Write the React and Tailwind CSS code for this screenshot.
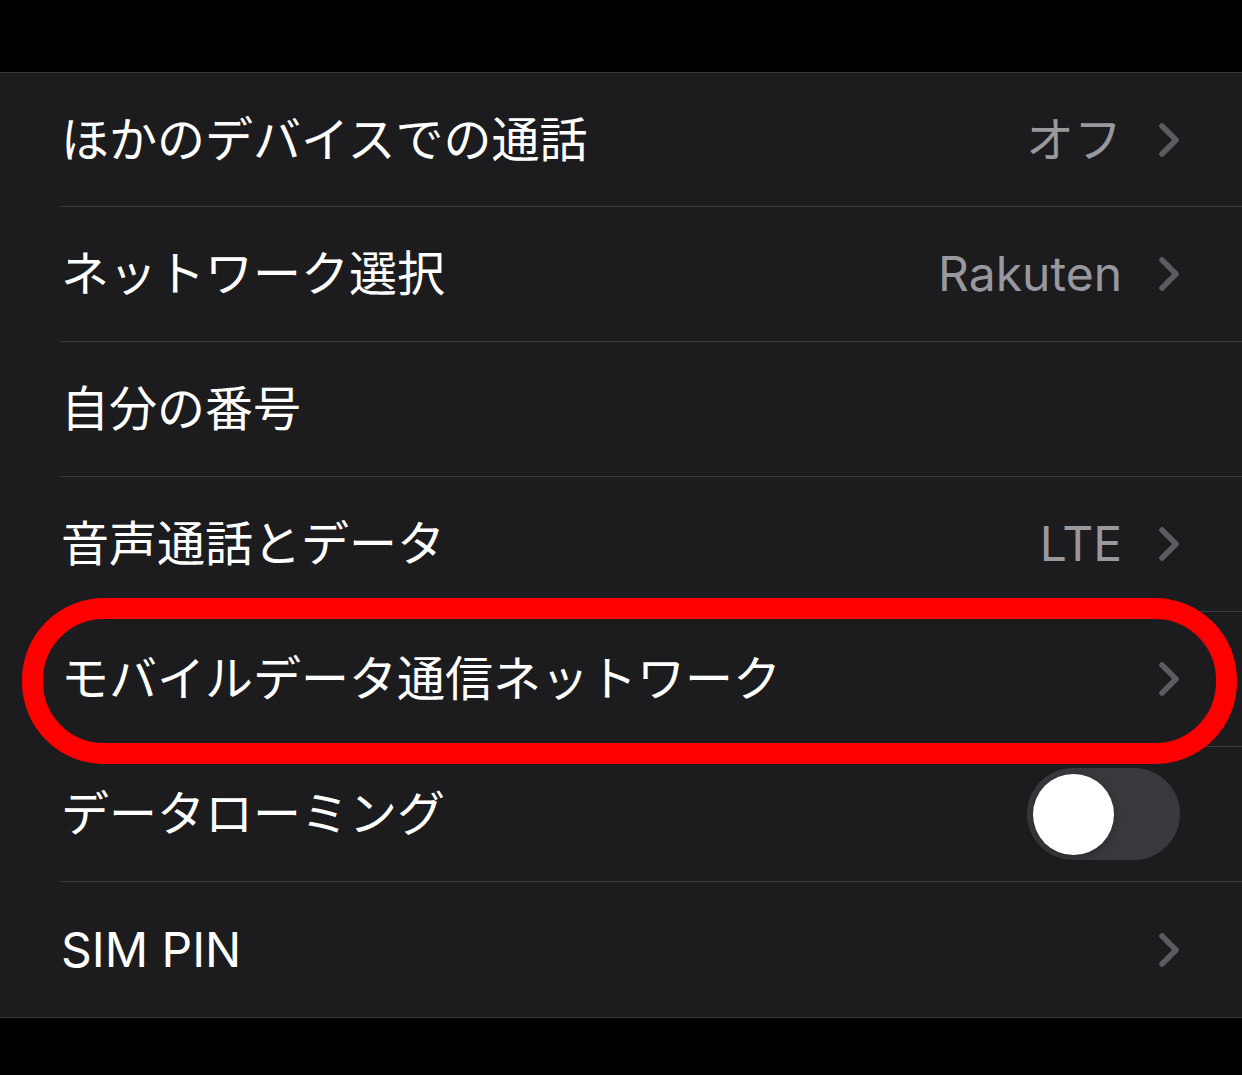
const FONT = "font-['Inter','Noto_Sans_CJK_JP',sans-serif]";

function Chevron() {
  return (
    <svg width="22" height="36" viewBox="0 0 22 36" className="shrink-0">
      <path d="M4 4 L18 18 L4 32" fill="none" stroke="#5c5c60" strokeWidth="5.5" strokeLinecap="round" strokeLinejoin="round" />
    </svg>
  );
}

function Toggle() {
  return (
    <div className="w-[153px] h-[92px] rounded-full bg-[#39393d] flex items-center pl-[6px]">
      <div className="w-[81px] h-[81px] rounded-full bg-white shadow-[0_3px_8px_rgba(0,0,0,0.25)]" />
    </div>
  );
}

function Row({ label, value, chevron = true, toggle = false, last = false, highlight = false, first = false }) {
  return (
    <div className={`relative pl-[60px] flex ${first ? 'h-[134px]' : 'h-[135px]'}`}>
      <div className={`flex-1 flex items-center pr-[62px] ${last ? '' : 'border-b border-[#38383a]'}`}>
        <span className="pl-[1px] text-white text-[48px] leading-none flex-1 whitespace-nowrap">{label}</span>
        {value && <span className="text-[#98989e] text-[48px] leading-none mr-[36px]">{value}</span>}
        {chevron && !toggle && <Chevron />}
        {toggle && <Toggle />}
      </div>
      {highlight && (
        <div className="absolute left-[22px] right-[5px] top-[-14px] bottom-[-17px] rounded-[82px] border-[21px] border-[#ff0000] pointer-events-none" />
      )}
    </div>
  );
}

export default function App() {
  return (
    <div className={`w-[1242px] h-[1075px] bg-black ${FONT}`}>
      <div className="h-[72px]" />
      <div className="bg-[#1c1c1e] border-t border-b border-[#38383a]">
        <Row label="ほかのデバイスでの通話" value="オフ" first />
        <Row label="ネットワーク選択" value="Rakuten" />
        <Row label="自分の番号" chevron={false} />
        <Row label="音声通話とデータ" value="LTE" />
        <Row label="モバイルデータ通信ネットワーク" highlight />
        <Row label="データローミング" toggle />
        <Row label="SIM PIN" last />
      </div>
    </div>
  );
}
